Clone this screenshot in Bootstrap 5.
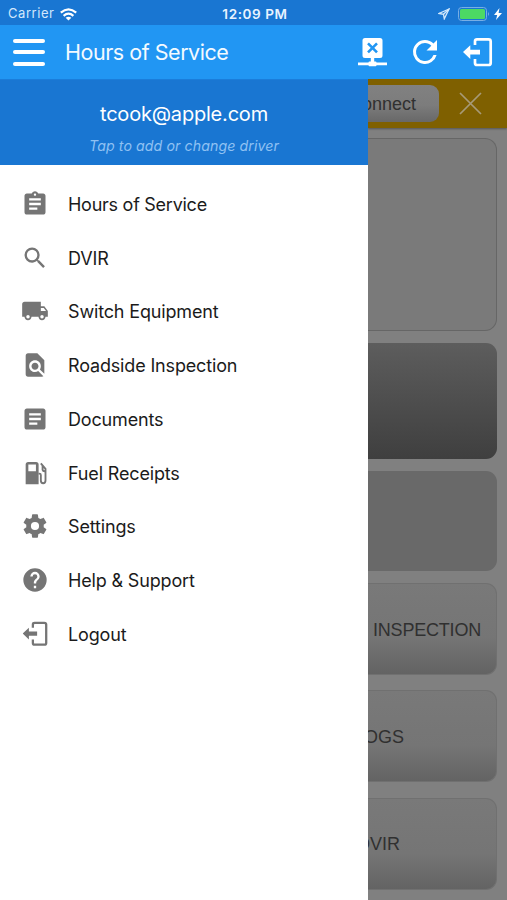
<!DOCTYPE html>
<html lang="en">
<head>
<meta charset="utf-8">
<meta name="viewport" content="width=device-width, initial-scale=1">
<title>Hours of Service</title>
<link href="https://cdn.jsdelivr.net/npm/bootstrap@5.3.0/dist/css/bootstrap.min.css" rel="stylesheet">
<style>
  body { font-family: Inter, "Liberation Sans", sans-serif; width: 507px; height: 900px; overflow: hidden; background: #808080; }
  svg { display: block; flex: none; }
  .statusbar { height: 25px; background: #1976d2; color: #e8f3ff; font-size: 13px; padding: 3px 5px 0 8px; display: grid; grid-template-columns: 1fr auto 1fr; }
  .carrier { letter-spacing: .55px; color: #d3e8fc; }
  .clock { font-weight: 600; font-size: 13.5px; letter-spacing: .6px; }
  .appbar { height: 54px; background: #2196f3; padding: 0 14px 0 13px; }
  .burger { width: 32px; gap: 7.5px; }
  .burger span { height: 4px; border-radius: 2px; background: #fff; }
  .title { font-size: 21.5px; margin: 2px 0 0 20px; color: #f3faff; line-height: 1; letter-spacing: -.47px; }
  .reload { margin: 0 20px; }
  .drawer { width: 368px; background: #fff; flex: none; }
  .account { height: 86px; background: #1976d2; padding-top: 22px; border-top: 1px solid #1a7ddb; }
  .mail { font-size: 20px; line-height: 24px; color: #fff; letter-spacing: -.2px; }
  .hint { font-size: 14.2px; line-height: 18px; color: #8fc1f2; margin-top: 11px; font-style: italic; letter-spacing: .08px; }
  .menu { padding: 12px 0 0 21px; }
  .entry { height: 53.75px; gap: 19px; font-size: 18px; color: #1b1b1b; letter-spacing: -.16px; }
  .entry span { padding-top: 1px; }
  .entry:first-child span { letter-spacing: -.26px; }
  .entry svg { fill: #757575; width: 28px; height: 28px; }
  .page { width: 139px; font-family: "Liberation Sans", Arial, sans-serif; font-size: 18px; color: #303030; overflow: hidden; }
  .notice { height: 49px; background: #7f6000; padding-right: 25px; box-shadow: 0 1px 2px rgba(0,0,0,.35); }
  .connect { height: 37px; width: 130px; flex: none; border-radius: 0 9px 9px 0; background: linear-gradient(#818181, #7c7c7c 55%, #686868); padding: 2px 23px 0 0; }
  .dismiss { margin-left: 20px; }
  .panel { margin-right: 10px; border-radius: 11px; flex: none; white-space: nowrap; }
  .outline { height: 193px; margin-top: 10px; background: #7a7a7a; border: 1px solid #666; border-left: 0; border-radius: 0 12px 12px 0; }
  .dark { height: 116px; margin-top: 12px; background: linear-gradient(#5d5d5d, #3f3f3f); border-radius: 0 11px 11px 0; }
  .flat { height: 100px; margin-top: 12px; background: #696969; border-radius: 0 11px 11px 0; }
  .tile { height: 92px; margin-top: 15.3px; padding-top: 2px; background: linear-gradient(#797979, #757575 60%, #636363); border: 1px solid #707070; border-left: 0; border-radius: 0 11px 11px 0; }
  .tile.first { margin-top: 12px; letter-spacing: -.2px; }
  .end-near { padding-right: 15px; } .end-mid { padding-right: 92px; } .end-far { padding-right: 96px; }
</style>
<script src="https://cdn.jsdelivr.net/npm/bootstrap@5.3.0/dist/js/bootstrap.bundle.min.js"></script>
</head>
<body class="d-flex flex-column">
<svg width="0" height="0" class="d-none">
  <symbol id="exit" viewBox="0 0 30 30"><path d="M12 8V4.200Q12 2.300 14 2.300H25.500Q27.700 2.300 27.700 4.400V26Q27.700 28 25.500 28H14Q12 28 12 26V22" fill="none" stroke="currentColor" stroke-width="2.700"/><path d="M0 15l7.300-6.800v4.500H17v4.800H7.300V22z" fill="currentColor"/></symbol>
</svg>
<header class="statusbar align-items-center">
  <div class="d-flex align-items-center"><span class="carrier">Carrier</span>
    <svg style="margin-left:6px" width="17" height="13" viewBox="0 0 17 13" fill="none" stroke="#fff" stroke-width="2.200"><path d="M.8 4.700Q8.500-2 16.200 4.700M3.600 7.800Q8.500 3.500 13.400 7.800"/><path d="M8.500 12.500L5.600 9.800Q8.500 7.600 11.400 9.800z" fill="#fff" stroke="none"/></svg>
  </div>
  <span class="clock">12:09 PM</span>
  <div class="d-flex align-items-center justify-content-end">
    <svg width="12" height="12" viewBox="0 0 12 12" fill="none" stroke="#d3e8fc" stroke-width="1.300"><path d="M11 1L1 5.500l4.500.8.800 4.500z"/><path d="M11 1L5.500 6.300"/></svg>
    <svg class="ms-2" width="32" height="14" viewBox="0 0 32 14"><rect x=".5" y=".5" width="28" height="13" rx="3" fill="none" stroke="#78aee5"/><rect x="2" y="2" width="25" height="10" rx="1.500" fill="#4cd964"/><path d="M30 5q2 2 0 4z" fill="#78aee5"/></svg>
    <svg class="ms-1" width="8" height="12" viewBox="0 0 8 12" fill="#fff"><path d="M5.500 0L0 7h3.200L2 12 8 5H4.600z"/></svg>
  </div>
</header>
<nav class="appbar d-flex align-items-center">
  <div class="burger d-flex flex-column"><span></span><span></span><span></span></div>
  <div class="title">Hours of Service</div>
  <svg class="ms-auto" width="29" height="30" viewBox="0 0 29 30"><path d="M7 1h15q2.500 0 2.500 2.500v15Q24.500 21 22 21h-5.800v3.500h1.300q1 0 1 1H29v2.800H18.500q0 1-1 1h-6q-1 0-1-1H0v-2.800h10.500q0-1 1-1h1.300V21H7q-2.500 0-2.500-2.500v-15Q4.500 1 7 1z" fill="#fff"/><path d="M10 6.300l9 9m0-9l-9 9" stroke="#2196f3" stroke-width="2.600"/></svg>
  <svg class="reload" width="36" height="36" viewBox="0 0 24 24" fill="#fff"><path d="M17.650 6.350A7.958 7.958 0 0 0 12 4a8 8 0 1 0 7.730 10h-2.080A6 6 0 1 1 12 6c1.660 0 3.140.69 4.220 1.780L13 11h7V4z"/></svg>
  <svg width="30" height="30" color="#fff"><use href="#exit"/></svg>
</nav>
<main class="d-flex flex-grow-1 overflow-hidden">
  <aside class="drawer">
    <div class="account text-center"><div class="mail">tcook@apple.com</div><div class="hint">Tap to add or change driver</div></div>
    <div class="menu">
      <div class="entry d-flex align-items-center"><svg viewBox="0 0 24 24"><path d="M19 3h-4.180C14.400 1.840 13.300 1 12 1s-2.400.84-2.820 2H5c-1.100 0-2 .9-2 2v14c0 1.100.9 2 2 2h14c1.100 0 2-.9 2-2V5c0-1.100-.9-2-2-2zm-7 0c.55 0 1 .45 1 1s-.45 1-1 1-1-.45-1-1 .45-1 1-1zm2 14H7v-2h7v2zm3-4H7v-2h10v2zm0-4H7V7h10v2z"/></svg><span>Hours of Service</span></div>
      <div class="entry d-flex align-items-center"><svg viewBox="0 0 24 24"><path d="M15.500 14h-.79l-.28-.27A6.470 6.470 0 0 0 16 9.500 6.500 6.500 0 1 0 9.500 16c1.610 0 3.090-.59 4.230-1.570l.27.28v.79l5 4.990L20.490 19l-4.990-5zm-6 0a4.500 4.500 0 1 1 0-9 4.500 4.500 0 0 1 0 9z"/></svg><span>DVIR</span></div>
      <div class="entry d-flex align-items-center"><svg viewBox="0 0 24 24"><path d="M20 8h-3V4H3c-1.100 0-2 .9-2 2v11h2c0 1.660 1.340 3 3 3s3-1.340 3-3h6c0 1.660 1.340 3 3 3s3-1.340 3-3h2v-5l-3-4zM6 18.500a1.500 1.500 0 1 1 0-3 1.500 1.500 0 0 1 0 3zm13.500-9l1.960 2.500H17V9.500h2.500zm-1.500 9a1.500 1.500 0 1 1 0-3 1.500 1.500 0 0 1 0 3z"/></svg><span>Switch Equipment</span></div>
      <div class="entry d-flex align-items-center"><svg viewBox="0 0 24 24"><path d="M20 19.590V8l-6-6H6c-1.100 0-1.990.9-1.990 2L4 20c0 1.100.89 2 1.990 2H18c.45 0 .85-.15 1.190-.4l-4.430-4.430c-.8.520-1.740.83-2.760.83-2.760 0-5-2.240-5-5s2.240-5 5-5 5 2.240 5 5c0 1.020-.31 1.960-.83 2.750L20 19.590zM9 13c0 1.660 1.340 3 3 3s3-1.340 3-3-1.340-3-3-3-3 1.340-3 3z"/></svg><span>Roadside Inspection</span></div>
      <div class="entry d-flex align-items-center"><svg viewBox="0 0 24 24"><path d="M19 3H5c-1.100 0-2 .9-2 2v14c0 1.100.9 2 2 2h14c1.100 0 2-.9 2-2V5c0-1.100-.9-2-2-2zm-5 14H7v-2h7v2zm3-4H7v-2h10v2zm0-4H7V7h10v2z"/></svg><span>Documents</span></div>
      <div class="entry d-flex align-items-center"><svg viewBox="0 0 24 24"><path fill-rule="evenodd" d="M6.200 2.500h6.700q2.200 0 2.200 2.200v17H4v-17q0-2.200 2.200-2.200zm.1 2.300v5.700h6.500V4.800z"/><path d="M15 12.500h.8q1.200 0 1.200 1.300V18.500q0 2.300 2 2.300t2-2.300V8.500L17 3.700M18.500 6v3.200q.3 1.600 2.500 1.300" fill="none" stroke="#757575" stroke-width="1.600"/></svg><span>Fuel Receipts</span></div>
      <div class="entry d-flex align-items-center"><svg viewBox="0 0 24 24"><path d="M19.430 12.980c.04-.32.070-.64.070-.98s-.03-.66-.07-.98l2.110-1.650c.19-.15.240-.42.120-.64l-2-3.460c-.12-.22-.39-.3-.61-.22l-2.490 1c-.52-.4-1.080-.73-1.690-.98l-.38-2.650A.488.488 0 0 0 14 2h-4c-.25 0-.46.18-.49.42l-.38 2.650c-.61.25-1.170.59-1.690.98l-2.490-1c-.23-.09-.49 0-.61.220l-2 3.460c-.13.220-.07.49.12.640l2.110 1.650c-.04.320-.07.65-.07.980s.03.660.07.980l-2.110 1.650c-.19.150-.24.420-.12.640l2 3.460c.12.220.39.3.61.220l2.490-1c.52.4 1.080.73 1.690.980l.38 2.650c.03.240.24.420.49.420h4c.25 0 .46-.18.49-.42l.38-2.650c.61-.25 1.170-.59 1.690-.98l2.490 1c.23.090.49 0 .61-.22l2-3.460c.12-.22.070-.49-.12-.64l-2.110-1.650zM12 15.500a3.500 3.500 0 1 1 0-7 3.500 3.500 0 0 1 0 7z"/></svg><span>Settings</span></div>
      <div class="entry d-flex align-items-center"><svg viewBox="0 0 24 24"><path d="M12 2a10 10 0 1 0 0 20 10 10 0 0 0 0-20zm1 17h-2v-2h2v2zm2.070-7.750l-.9.920C13.450 12.900 13 13.500 13 15h-2v-.5c0-1.100.45-2.100 1.170-2.830l1.240-1.260c.37-.36.590-.86.590-1.410a2 2 0 1 0-4 0H8a4 4 0 1 1 8 0c0 .88-.36 1.680-.93 2.250z"/></svg><span>Help &amp; Support</span></div>
      <div class="entry d-flex align-items-center"><svg viewBox="-2 -1 33 33" color="#757575"><use href="#exit" width="30" height="30"/></svg><span>Logout</span></div>
    </div>
  </aside>
  <section class="page d-flex flex-column">
    <div class="notice d-flex align-items-center justify-content-end flex-shrink-0">
      <div class="connect d-flex align-items-center justify-content-end">Connect</div>
      <svg class="dismiss" width="23" height="23" viewBox="0 0 23 23" stroke="#a79a78" stroke-width="1.700"><path d="M1 1l21 21M22 1L1 22"/></svg>
    </div>
    <div class="panel outline"></div>
    <div class="panel dark"></div>
    <div class="panel flat"></div>
    <div class="panel tile first d-flex align-items-center justify-content-end end-near">INSPECTION</div>
    <div class="panel tile d-flex align-items-center justify-content-end end-mid">LOGS</div>
    <div class="panel tile d-flex align-items-center justify-content-end end-far">DVIR</div>
  </section>
</main>
</body>
</html>
